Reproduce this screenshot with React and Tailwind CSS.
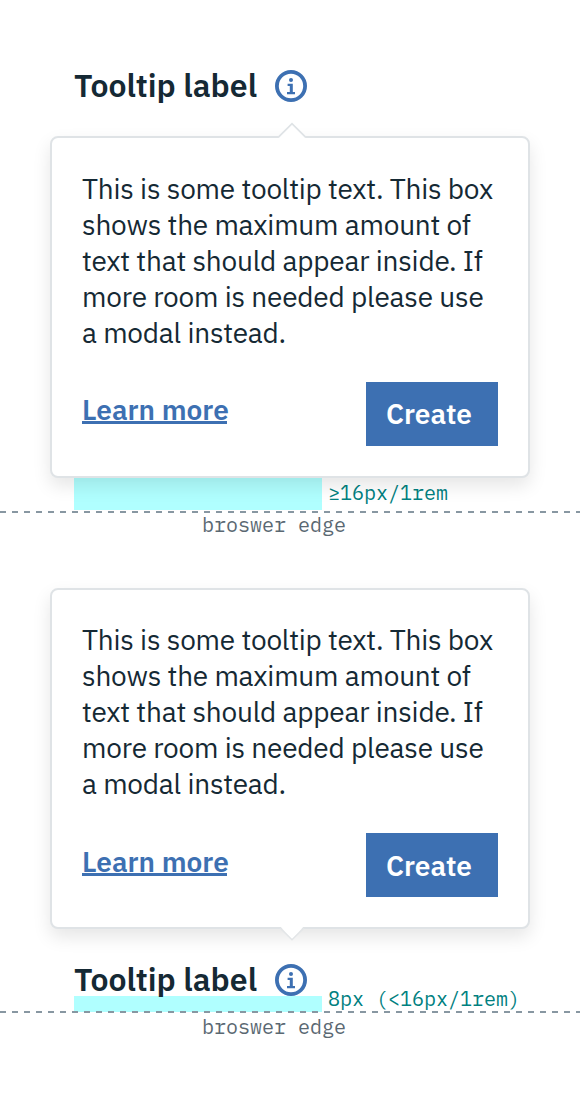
function InfoIcon() {
  return (
    <svg className="h-8 w-8 shrink-0" viewBox="0 0 32 32" fill="none">
      <circle cx="16" cy="16" r="14.1" stroke="#3d70b2" strokeWidth="3.8" />
      <circle cx="16" cy="10" r="2" fill="#3d70b2" />
      <path d="M12.6 13.8h5.2V22H20v2.2h-8V22h2.8v-6h-2.2z" fill="#3d70b2" />
    </svg>
  );
}

function TooltipLabel() {
  return (
    <div className="relative z-10 flex h-9 items-center pl-[74px]">
      <span className="w-[201px] whitespace-nowrap pb-0.5 text-[32px] font-semibold leading-[34px] text-[#152934]">
        Tooltip label
      </span>
      <InfoIcon />
    </div>
  );
}

function Caret({ side }) {
  return side === "top" ? (
    <svg className="absolute -top-4 left-[225px] h-[17px] w-[30px]" viewBox="0 0 30 17" fill="none">
      <path d="M1 16.3 15 2.3 29 16.3z" fill="#fff" />
      <path d="M1.2 15.4 15 1.7 28.8 15.4" stroke="#dfe3e6" strokeWidth="1.8" />
    </svg>
  ) : (
    <svg className="absolute -bottom-[15px] left-[225px] h-[17px] w-[30px]" viewBox="0 0 30 17" fill="none">
      <path d="M2 0 15 14.2 28 0z" fill="#fff" />
      <path d="M3 3 15 14.8 27 3" stroke="#e3e6e8" strokeWidth="1.4" />
    </svg>
  );
}

function TooltipCard({ caret }) {
  const top = caret === "top";
  return (
    <div
      className={`relative z-10 mx-[50px] rounded-lg border-2 border-[#dfe3e6] bg-white px-[30px] shadow-[0_8px_18px_0_rgba(0,0,0,0.1)] ${
        top ? "h-[342px] pt-[33px]" : "h-[341px] pt-8"
      }`}
    >
      <Caret side={caret} />
      <p className="whitespace-nowrap text-[28px] leading-9 tracking-[-0.21px] text-[#152934]">
        This is some tooltip text. This box
        <br />
        shows the maximum amount of
        <br />
        text that should appear inside. If
        <br />
        more room is needed please use
        <br />
        a modal instead.
      </p>
      <div className="mt-[31px] flex items-start justify-between">
        <a
          className={`h-8 w-[145px] whitespace-nowrap border-b-3 border-[#3d70b2] text-[28px] font-semibold leading-9 text-[#3d70b2] ${
            top ? "mt-2.5" : "mt-[11px]"
          }`}
        >
          Learn more
        </a>
        <button
          className={`h-16 w-[132px] bg-[#3d70b2] pl-5 text-left text-[28px] font-semibold text-white ${
            top ? "" : "pt-0.5"
          }`}
        >
          Create
        </button>
      </div>
    </div>
  );
}

function BrowserEdge({ textClass }) {
  return (
    <div className="relative z-10">
      <div className="h-0.5 bg-[repeating-linear-gradient(90deg,#8897a2_0_6px,transparent_6px_12px)]" />
      <div
        className={`pl-[202px] font-['IBM_Plex_Mono','Liberation_Mono',monospace] text-[20px] leading-6 text-[#5a6872] ${textClass}`}
      >
        broswer edge
      </div>
    </div>
  );
}

export default function App() {
  return (
    <main className="flex h-[1112px] w-[580px] flex-col overflow-hidden bg-white pt-[68px] font-['IBM_Plex_Sans','Roboto',sans-serif]">
      <section className="flex h-[520px] flex-col">
        <TooltipLabel />
        <div className="mt-8">
          <TooltipCard caret="top" />
        </div>
        <div className="mb-px flex h-8 pl-[74px]">
          <div className="w-[248px] bg-[#b0ffff]" />
          <span className="ml-1.5 mt-0.5 font-['IBM_Plex_Mono','Liberation_Mono',monospace] text-[20px] leading-[26px] text-[#008080]">
            ≥16px/1rem
          </span>
        </div>
        <BrowserEdge textClass="pt-0" />
      </section>
      <section className="flex flex-col">
        <TooltipCard caret="bottom" />
        <div className="mt-[33px]">
          <TooltipLabel />
        </div>
        <div className="-mb-px -mt-0.5 flex h-4 pl-[74px]">
          <div className="w-[248px] bg-[#b0ffff]" />
          <span className="-mt-2.5 ml-1.5 whitespace-nowrap font-['IBM_Plex_Mono','Liberation_Mono',monospace] text-[20px] leading-[26px] text-[#008080]">
            8px (&lt;16px/1rem)
          </span>
        </div>
        <BrowserEdge textClass="pt-0.5" />
      </section>
    </main>
  );
}
